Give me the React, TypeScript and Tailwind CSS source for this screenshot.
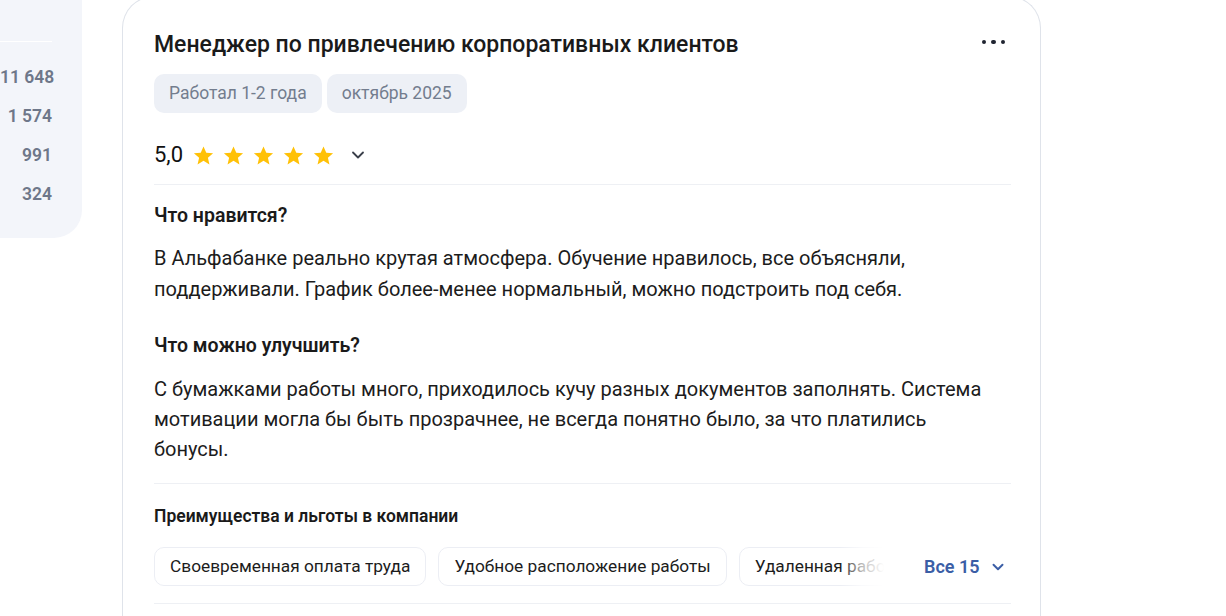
import { ChevronDown } from "lucide-react";

const stats = ["11 648", "1 574", "991", "324"];
const perks = [
  "Своевременная оплата труда",
  "Удобное расположение работы",
  "Удаленная работа",
];

function StarIcon() {
  return (
    <svg viewBox="0 0 24 24" className="size-[23px]">
      <path
        fill="#ffc107"
        d="M12 2.5l2.9 6.6 7.1.6-5.4 4.7 1.6 7-6.2-3.8-6.2 3.8 1.6-7L2 9.7l7.1-.6z"
      />
    </svg>
  );
}

function StatsPanel() {
  return (
    <aside className="w-[82px] shrink-0 h-[238px] rounded-br-[28px] bg-[#f3f5fa] pr-[30px]">
      <div className="pt-[41px]">
        <div className="h-px bg-white" />
      </div>
      <ul className="mt-[24px] flex flex-col gap-[17px] text-right text-[17.5px] font-semibold leading-[22px] text-[#6e7789]">
        {stats.map((n) => (
          <li key={n} className="whitespace-nowrap">
            {n}
          </li>
        ))}
      </ul>
    </aside>
  );
}

function ReviewCard() {
  return (
    <article className="-mt-1 w-[919px] shrink-0 rounded-t-[32px] border border-b-0 border-[#dfe3ea] bg-white pl-[31px] pr-[29px] pt-[34px]">
      <header className="flex items-start justify-between">
        <h2 className="text-[23px] font-medium leading-[28px] text-[#1a1a1a]">
          Менеджер по привлечению корпоративных клиентов
        </h2>
        <button className="mr-[6px] mt-[1px] flex h-[20px] items-center gap-[5px]">
          <span className="size-[4.5px] rounded-full bg-[#1f2430]" />
          <span className="size-[4.5px] rounded-full bg-[#1f2430]" />
          <span className="size-[4.5px] rounded-full bg-[#1f2430]" />
        </button>
      </header>

      <div className="mt-[15px] flex gap-[5px]">
        <span className="rounded-[10px] bg-[#edf0f6] px-[15px] py-[8px] text-[17.5px] leading-[23px] text-[#737d8e]">
          Работал 1-2 года
        </span>
        <span className="rounded-[10px] bg-[#edf0f6] px-[15px] py-[8px] text-[17.5px] leading-[23px] text-[#737d8e]">
          октябрь 2025
        </span>
      </div>

      <div className="mt-[27px] flex items-center pb-[14px]">
        <span className="mr-[9px] text-[22px] leading-[30px] text-[#111]">5,0</span>
        <div className="flex gap-[7px]">
          {[0, 1, 2, 3, 4].map((i) => (
            <StarIcon key={i} />
          ))}
        </div>
        <ChevronDown className="ml-[13px] size-[20px] text-[#3a3f4a]" strokeWidth={2.2} />
      </div>

      <div className="h-px bg-[#eef0f4]" />

      <section className="pt-[19px]">
        <h3 className="text-[19.5px] font-semibold leading-[24px] text-[#1a1a1a]">Что нравится?</h3>
        <p className="mt-[15px] text-[20px] leading-[31px] text-[#1c1c1c]">
          В Альфабанке реально крутая атмосфера. Обучение нравилось, все объясняли,
          <br />
          поддерживали. График более-менее нормальный, можно подстроить под себя.
        </p>
      </section>

      <section className="pt-[29px]">
        <h3 className="text-[19.5px] font-semibold leading-[24px] text-[#1a1a1a]">Что можно улучшить?</h3>
        <p className="mt-[16px] text-[20px] leading-[30px] text-[#1c1c1c]">
          С бумажками работы много, приходилось кучу разных документов заполнять. Система
          <br />
          мотивации могла бы быть прозрачнее, не всегда понятно было, за что платились
          <br />
          бонусы.
        </p>
      </section>

      <div className="mt-[19px] h-px bg-[#eef0f4]" />

      <section className="pt-[21px]">
        <h3 className="text-[17.5px] font-semibold leading-[22px] text-[#1a1a1a]">
          Преимущества и льготы в компании
        </h3>
        <div className="mt-[20px] flex items-center">
          <div className="relative w-[730px] overflow-hidden">
            <div className="flex gap-[12px]">
              {perks.map((p) => (
                <span
                  key={p}
                  className="shrink-0 whitespace-nowrap rounded-[10px] border border-[#eceef4] bg-white px-[15px] py-[7px] text-[17.3px] leading-[23px] text-[#1c1c1c]"
                >
                  {p}
                </span>
              ))}
            </div>
            <div className="pointer-events-none absolute inset-y-0 right-0 w-[44px] bg-gradient-to-r from-white/0 via-white/70 to-white" />
          </div>
          <button className="ml-[40px] flex items-center gap-[9px] text-[18px] font-semibold text-[#3b5ea6]">
            Все 15
            <ChevronDown className="size-[18px]" strokeWidth={2.6} />
          </button>
        </div>
        <div className="mt-[17px] h-px bg-[#eef0f4]" />
      </section>
      <div className="h-[40px]" />
    </article>
  );
}

export default function App() {
  return (
    <div className="h-[616px] overflow-hidden bg-white font-['Roboto',sans-serif]">
      <div className="flex items-start gap-[40px]">
        <StatsPanel />
        <ReviewCard />
      </div>
    </div>
  );
}
